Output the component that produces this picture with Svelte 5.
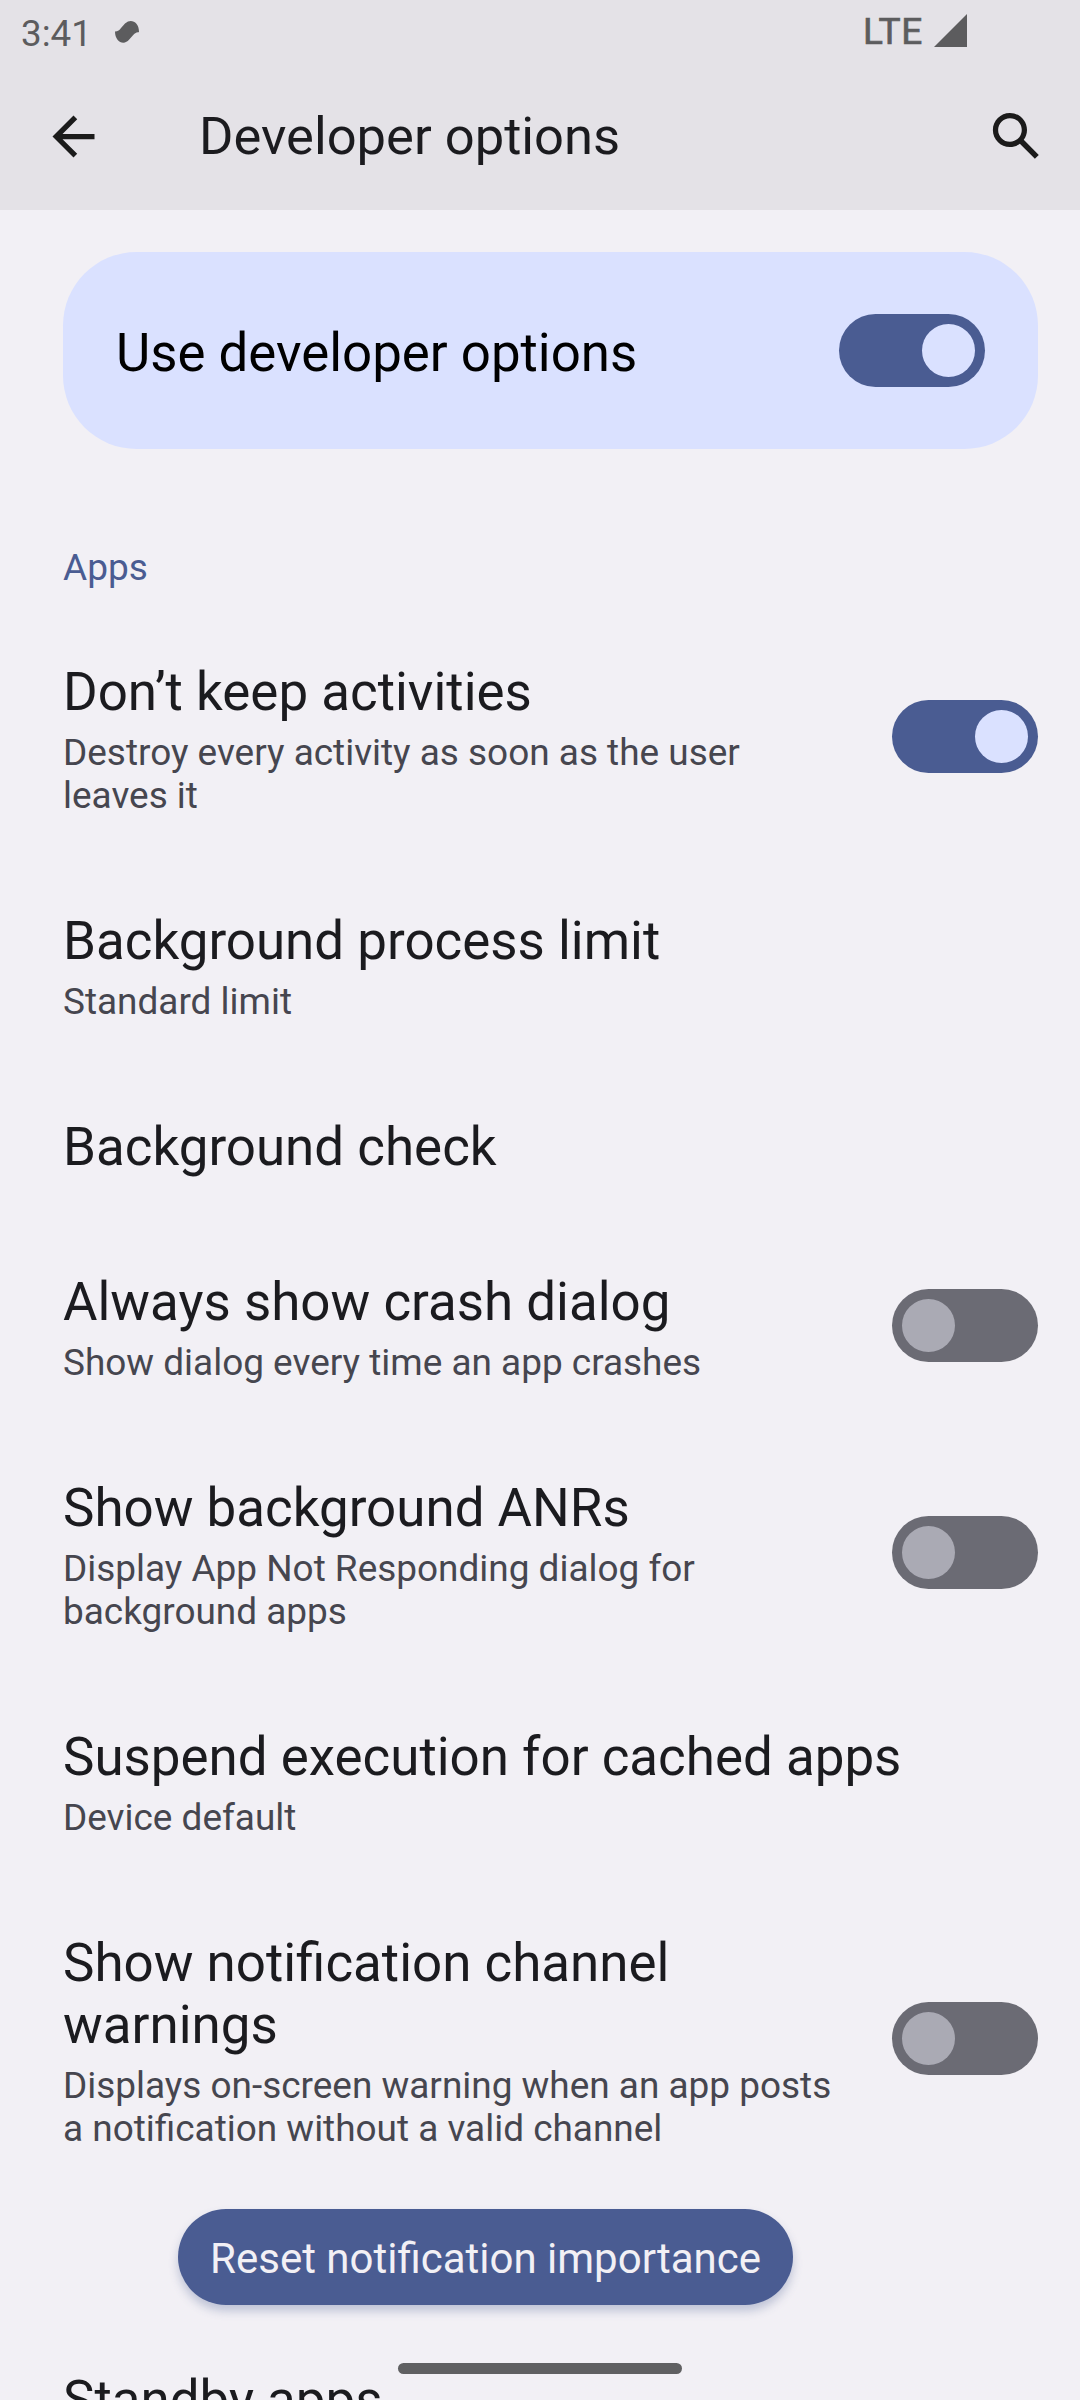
<script>
  const rows = [
    { title: ['Don’t keep activities'], summary: ['Destroy every activity as soon as the user', 'leaves it'], on: true },
    { title: ['Background process limit'], summary: ['Standard limit'] },
    { title: ['Background check'], summary: [] },
    { title: ['Always show crash dialog'], summary: ['Show dialog every time an app crashes'], on: false },
    { title: ['Show background ANRs'], summary: ['Display App Not Responding dialog for', 'background apps'], on: false },
    { title: ['Suspend execution for cached apps'], summary: ['Device default'] },
    { title: ['Show notification channel', 'warnings'], summary: ['Displays on-screen warning when an app posts', 'a notification without a valid channel'], on: false }
  ];
</script>

{#snippet toggle(on)}
  <span class="switch" class:on><span class="thumb"></span></span>
{/snippet}

<div class="screen">
  <header>
    <div class="status">
      <span class="clock">3:41</span>
      <svg class="blob" width="24" height="22" viewBox="0 0 24 22">
        <path d="M0 10.500C3 10.500 4.500 9 6 7L10 2.500C12 .8 14 0 15.700 0C20 0 24 4 24 10.500C24 11.200 23.500 11.300 23 11.300C21 11.500 19.500 12.500 18 14.200L14 18.800C12.500 20.500 10.500 21.700 8.300 21.700C4 21.700 0 17.500 0 10.500Z" />
      </svg>
      <span class="lte">LTE</span>
      <svg class="signal" width="33" height="33" viewBox="0 0 33 33"><path d="M0 33H33V0Z" /></svg>
    </div>
    <div class="toolbar">
      <svg class="back" width="63" height="63" viewBox="0 0 24 24">
        <path d="M20 11H7.830l5.590-5.590L12 4l-8 8 8 8 1.410-1.410L7.830 13H20v-2z" />
      </svg>
      <h1>Developer options</h1>
      <svg class="search" width="63" height="63" viewBox="0 0 24 24">
        <path d="M20.490 19l-5.730-5.730C15.530 12.200 16 10.910 16 9.500 16 5.910 13.090 3 9.500 3S3 5.910 3 9.500 5.910 16 9.500 16c1.410 0 2.700-.470 3.770-1.240L19 20.490 20.490 19zM5 9.500C5 7.010 7.010 5 9.500 5S14 7.010 14 9.500 11.990 14 9.500 14 5 11.990 5 9.500z" />
      </svg>
    </div>
  </header>

  <main>
    <section class="card">
      <span class="label">Use developer options</span>
      {@render toggle(true)}
    </section>
    <h2>Apps</h2>
    {#each rows as row}
      <div class="row">
        <div class="text">
          {#each row.title as line}<div class="title">{line}</div>{/each}
          {#if row.summary.length}
            <div class="summary">
              {#each row.summary as line}<div>{line}</div>{/each}
            </div>
          {/if}
        </div>
        {#if row.on !== undefined}{@render toggle(row.on)}{/if}
      </div>
    {/each}
    <button>Reset notification importance</button>
    <div class="title standby">Standby apps</div>
  </main>
  <div class="handle"></div>
</div>

<style>
  :global(body) { margin: 0; }
  .screen {
    position: relative;
    display: flex;
    flex-direction: column;
    width: 1080px;
    height: 2400px;
    overflow: hidden;
    background: #f2f0f5;
    color: #1b1b1f;
    font-family: Roboto, "Liberation Sans", sans-serif;
  }
  header {
    flex: none;
    height: 210px;
    background: #e4e2e7;
  }
  .status {
    display: flex;
    align-items: flex-start;
    height: 63px;
    color: #5c5c5e;
    fill: #5c5c5e;
  }
  .clock {
    width: 94px;
    padding-left: 21px;
    box-sizing: border-box;
    margin-top: 12px;
    font-size: 36.75px;
    line-height: 43px;
  }
  .blob { margin: 21px 0 0 21px; }
  .lte {
    margin: 10px 0 0 724px;
    width: 71px;
    font-size: 37px;
    line-height: 43px;
    letter-spacing: 0.6px;
    -webkit-text-stroke: 0.7px #5c5c5e;
  }
  .signal { margin-top: 14px; }
  .toolbar {
    display: flex;
    align-items: center;
    height: 147px;
    fill: #1b1b1b;
  }
  .back { margin-left: 42px; }
  h1 {
    flex: 1;
    margin: 0 0 0 94px;
    padding-bottom: 1px;
    font-size: 52.5px;
    line-height: 62px;
    font-weight: 400;
  }
  .search { margin-right: 32px; }
  main {
    display: flex;
    flex-direction: column;
    align-items: flex-start;
    padding: 42px 42px 0 63px;
  }
  .card {
    display: flex;
    flex: none;
    align-items: center;
    justify-content: space-between;
    box-sizing: border-box;
    width: 975px;
    height: 197px;
    padding: 0 53px;
    border-radius: 73.5px;
    background: #dae1ff;
    color: #000;
    font-size: 52.8px;
    line-height: 62px;
  }
  .label { padding-top: 5px; }
  .switch {
    display: flex;
    flex: none;
    align-items: center;
    box-sizing: border-box;
    width: 146px;
    height: 73px;
    padding: 0 10px;
    border-radius: 37px;
    background: #6b6b74;
  }
  .switch.on {
    justify-content: flex-end;
    background: #4a5c92;
  }
  .thumb {
    width: 53px;
    height: 53px;
    border-radius: 50%;
    background: #aaaab4;
  }
  .on .thumb { background: #dae1ff; }
  h2 {
    margin: 97px 0 23px;
    color: #4a5c92;
    font-size: 37px;
    line-height: 43px;
    font-weight: 400;
  }
  .row {
    display: flex;
    align-items: center;
    justify-content: space-between;
    width: 975px;
  }
  .text { padding: 49px 0 44px; }
  .title {
    font-size: 52.9px;
    line-height: 62px;
    white-space: nowrap;
  }
  .summary {
    padding-top: 8px;
    color: #46464f;
    font-size: 36.95px;
    line-height: 43px;
    white-space: nowrap;
  }
  button {
    width: 615px;
    height: 96px;
    margin: 15px 0 0 115px;
    padding: 4px 0 0;
    border: 0;
    border-radius: 48px;
    background: #4a5c92;
    color: #f2f0f5;
    font: 400 42px/50px Roboto, "Liberation Sans", sans-serif;
    box-shadow: 0 6px 10px rgba(74, 92, 146, 0.3);
  }
  .standby { margin-top: 64px; }
  .handle {
    position: absolute;
    left: 398px;
    top: 2363px;
    width: 284px;
    height: 11px;
    border-radius: 6px;
    background: #606062;
  }
</style>
